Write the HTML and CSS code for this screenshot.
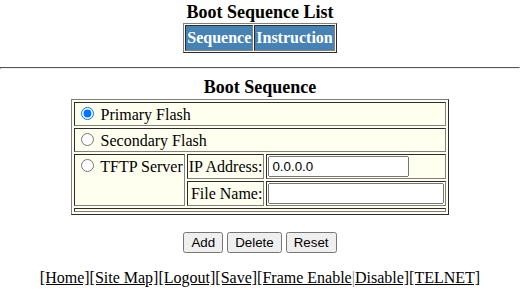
FILE: index.html
```html
<!DOCTYPE html>
<html lang="en">
<head>
    <meta charset="UTF-8">
    <title>Boot Sequence</title>
    <link rel="stylesheet" href="styles.css">
</head>
<body>
    <div class="page-title">Boot Sequence List</div>

    <table class="tab-bar">
        <tr>
            <td class="tab">Sequence</td>
            <td class="tab">Instruction</td>
        </tr>
    </table>

    <hr class="divider">

    <div class="section-title">Boot Sequence</div>

    <form class="boot-form">
        <table class="boot-table">
            <tr>
                <td colspan="3"><input type="radio" name="boot" checked> Primary Flash</td>
            </tr>
            <tr>
                <td colspan="3"><input type="radio" name="boot"> Secondary Flash</td>
            </tr>
            <tr>
                <td rowspan="2" class="top-cell"><input type="radio" name="boot"> TFTP Server</td>
                <td class="label">IP Address:</td>
                <td><input type="text" class="ip-input" value="0.0.0.0"></td>
            </tr>
            <tr>
                <td class="label">File Name:</td>
                <td><input type="text" class="file-input"></td>
            </tr>
            <tr>
                <td colspan="3" class="spacer"></td>
            </tr>
        </table>

        <div class="actions">
            <button type="button">Add</button>
            <button type="button">Delete</button>
            <button type="reset">Reset</button>
        </div>
    </form>

    <div class="footer">
        <a href="#">[Home]</a><a href="#">[Site Map]</a><a href="#">[Logout]</a><a href="#">[Save]</a><a href="#">[Frame Enable</a><span class="sep">|</span><a href="#">Disable]</a><a href="#">[TELNET]</a>
    </div>
</body>
</html>
```

FILE: styles.css
```css
body {
    font-family: 'Liberation Serif', 'Times New Roman', serif;
    font-size: 16px;
    margin: 0;
    padding: 0;
    background-color: white;
    color: black;
}

.page-title {
    margin-top: 2px;
    text-align: center;
    font-size: 18px;
    font-weight: bold;
}

.tab-bar {
    margin: 0 auto;
    border: 1px outset #808080;
    border-spacing: 1px;
    background-color: #fffff0;
}

.tab {
    border: 1px inset #808080;
    padding: 3px 1px;
    background-color: #4682b4;
    color: white;
    font-weight: bold;
}

.divider {
    margin: 14px 0 8px;
    border: 1px inset #aaa;
    border-bottom-color: #eee;
    border-right-color: #eee;
}

.section-title {
    text-align: center;
    font-size: 18px;
    font-weight: bold;
}

.boot-form {
    margin: 1px 0 0;
}

.boot-table {
    margin: 0 auto;
    border: 1px outset #808080;
    border-spacing: 2px;
    background-color: #fffff0;
}

.boot-table td {
    border: 1px inset #808080;
    padding: 1px;
    background-color: #fffff0;
}

.boot-table td.top-cell {
    vertical-align: top;
}

.boot-table td.label {
    text-align: right;
}

.boot-table td.spacer {
    padding: 1px;
}

.boot-table input[type="radio"] {
    margin: 3px 3px 0 5px;
}

.boot-table input[type="text"] {
    font-family: 'Liberation Sans', Arial, sans-serif;
    font-size: 13.33px;
    box-sizing: border-box;
    height: 21px;
    padding: 1px 2px;
    margin: 0;
}

.ip-input {
    width: 141px;
}

.file-input {
    width: 176px;
}

.actions {
    margin-top: 17px;
    display: flex;
    justify-content: center;
    gap: 4px;
}

.actions button {
    font-family: 'Liberation Sans', Arial, sans-serif;
    font-size: 13.33px;
}

.footer {
    margin-top: 16px;
    text-align: center;
}

.footer a {
    color: black;
}

.sep {
    color: #888;
}
```
